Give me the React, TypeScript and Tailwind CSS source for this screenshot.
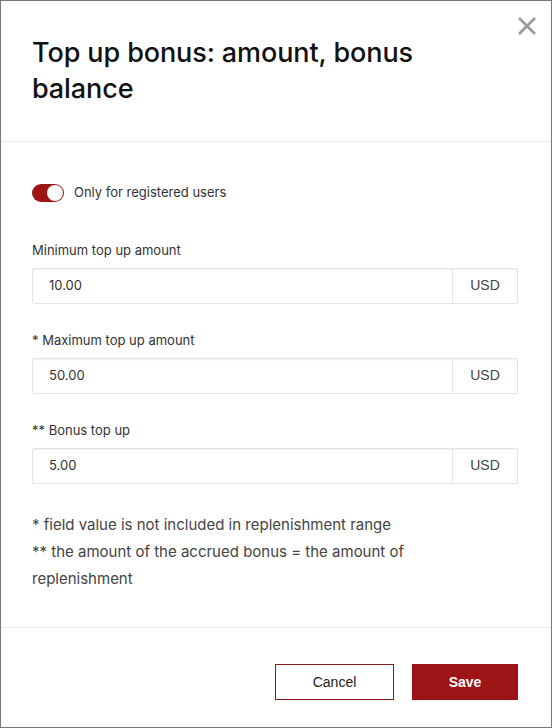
import React from "react";

const font = { fontFamily: "Inter, 'Noto Sans', sans-serif" };

function Field({ label, value }: { label: string; value: string }) {
  return (
    <div className="flex flex-col">
      <div className="text-[13px] leading-[18px] text-[#333] mb-[9px]">{label}</div>
      <div className="flex h-[36px] w-[486px] border border-[#e4e4e4] rounded-[2px] shadow-[inset_0_1px_2px_rgba(0,0,0,0.06)]">
        <div className="flex-1 flex items-center pl-[16px] text-[13px] text-[#333]">{value}</div>
        <div
          className="w-[65px] flex items-center justify-center border-l border-[#e4e4e4] text-[14px] text-[#444]"
          style={{ fontFamily: "'Liberation Sans', Arial, sans-serif" }}
        >
          USD
        </div>
      </div>
    </div>
  );
}

export default function App() {
  return (
    <div className="w-[552px] h-[728px] bg-white border border-[#777] flex flex-col" style={font}>
      <div className="relative h-[141px] border-b border-[#ececec] pl-[31px] pt-[34px]">
        <h1 className="text-[27px] leading-[36px] font-medium text-[#111] tracking-[-0.1px]">
          Top up bonus: amount, bonus
          <br />
          balance
        </h1>
        <svg className="absolute right-[14px] top-[15px]" width="20" height="20" viewBox="0 0 20 20">
          <path d="M2 2 L18 18 M18 2 L2 18" stroke="#9a9a9a" strokeWidth="2.6" />
        </svg>
      </div>
      <div className="flex-1 px-[31px] pt-[41px]">
        <div className="flex items-center gap-[10px]">
          <div className="w-[32px] h-[18px] rounded-full bg-[#9e1515] relative">
            <div className="absolute right-[1px] top-[1px] w-[16px] h-[16px] rounded-full bg-white" />
          </div>
          <span className="text-[13px] text-[#333]">Only for registered users</span>
        </div>
        <div className="mt-[38px] flex flex-col gap-[27px]">
          <Field label="Minimum top up amount" value="10.00" />
          <Field label="* Maximum top up amount" value="50.00" />
          <Field label="** Bonus top up" value="5.00" />
        </div>
        <div className="mt-[27px] text-[15px] leading-[27px] text-[#444]">
          <div>* field value is not included in replenishment range</div>
          <div>** the amount of the accrued bonus = the amount of</div>
          <div>replenishment</div>
        </div>
      </div>
      <div className="h-[100px] border-t border-[#ececec] flex items-start justify-end pr-[33px] pt-[36px] gap-[18px]">
        <button
          className="w-[119px] h-[36px] border border-[#8b1a1a] bg-white text-[14px] text-[#222]"
          style={{ fontFamily: "'Liberation Sans', Arial, sans-serif" }}
        >
          Cancel
        </button>
        <button
          className="w-[106px] h-[36px] bg-[#9d1316] text-white text-[14px] font-bold"
          style={{ fontFamily: "'Liberation Sans', Arial, sans-serif" }}
        >
          Save
        </button>
      </div>
    </div>
  );
}
